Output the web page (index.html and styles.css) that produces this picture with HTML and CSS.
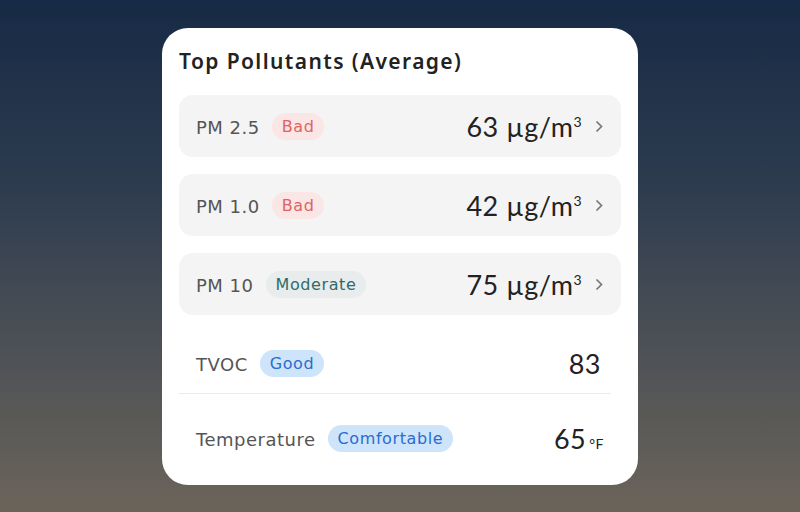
FILE: index.html
```html
<!DOCTYPE html>
<html lang="en">

<head>
    <meta charset="UTF-8">
    <meta name="viewport" content="width=device-width, initial-scale=1.0">
    <title>Air Quality</title>
    <link rel="stylesheet" href="styles.css">
</head>

<body>
    <div class="card">
        <h2 class="card-title">Top Pollutants (Average)</h2>

        <div class="pollutants">
            <a class="row tile" href="#">
                <span class="name">PM 2.5</span>
                <span class="badge bad">Bad</span>
                <span class="value">63 µg/m<sup>3</sup></span>
                <svg class="chevron" width="8" height="13" viewBox="0 0 8 13"><path d="M1.5 1.5 L6.5 6.5 L1.5 11.5" /></svg>
            </a>
            <a class="row tile" href="#">
                <span class="name">PM 1.0</span>
                <span class="badge bad">Bad</span>
                <span class="value">42 µg/m<sup>3</sup></span>
                <svg class="chevron" width="8" height="13" viewBox="0 0 8 13"><path d="M1.5 1.5 L6.5 6.5 L1.5 11.5" /></svg>
            </a>
            <a class="row tile" href="#">
                <span class="name">PM 10</span>
                <span class="badge moderate">Moderate</span>
                <span class="value">75 µg/m<sup>3</sup></span>
                <svg class="chevron" width="8" height="13" viewBox="0 0 8 13"><path d="M1.5 1.5 L6.5 6.5 L1.5 11.5" /></svg>
            </a>
        </div>

        <div class="row plain tvoc">
            <span class="name">TVOC</span>
            <span class="badge good">Good</span>
            <span class="value">83</span>
        </div>
        <div class="row plain temp">
            <span class="name">Temperature</span>
            <span class="badge good">Comfortable</span>
            <span class="value">65<small>°F</small></span>
        </div>
    </div>
</body>

</html>
```

FILE: styles.css
```css
body {
    margin: 0;
    height: 512px;
    background: linear-gradient(#172a45 0%, #2c3b4e 35%, #4a4f55 65%, #6b645a 100%);
    font-family: "DejaVu Sans", "Noto Sans", sans-serif;
    display: flex;
    justify-content: center;
    align-items: flex-start;
}

.card {
    margin-top: 28px;
    width: 476px;
    height: 457px;
    box-sizing: border-box;
    background-color: #fff;
    border-radius: 26px;
    padding: 17px 17px 15px;
}

.card-title {
    margin: 0;
    font-family: "Noto Sans", sans-serif;
    font-size: 21px;
    font-weight: 600;
    color: #222;
    line-height: 32px;
    letter-spacing: 1.4px;
}

.pollutants {
    margin-top: 18px;
    display: flex;
    flex-direction: column;
    gap: 17px;
}

.row {
    display: flex;
    align-items: center;
    text-decoration: none;
    padding: 0 18px 0 17px;
}

.tile {
    height: 62px;
    background-color: #f4f4f4;
    border-radius: 14px;
}

.name {
    font-size: 18px;
    letter-spacing: 0.5px;
    color: #555;
    margin-top: 2px;
}

.badge {
    margin-left: 12px;
    padding: 0 10px;
    height: 27px;
    line-height: 28px;
    border-radius: 14px;
    font-size: 16px;
    letter-spacing: 0.6px;
}

.badge.bad {
    background-color: #fbe6e6;
    color: #e06363;
}

.badge.moderate {
    background-color: #e8eced;
    color: #2f6b6b;
}

.badge.good {
    background-color: #cde4fb;
    color: #2a6ccf;
}

.value {
    margin-left: auto;
    font-family: "Lato", sans-serif;
    font-size: 27px;
    letter-spacing: 0.5px;
    color: #222;
}

.value sup {
    font-size: 14px;
    vertical-align: 10px;
    line-height: 0;
}

.value small {
    font-size: 14px;
    margin-left: 3px;
}

.chevron {
    margin-left: 13px;
    fill: none;
    stroke: #777;
    stroke-width: 1.7;
}

.tvoc {
    margin-top: 18px;
    height: 60px;
    margin-right: 10px;
    border-bottom: 1px solid #ececec;
    padding-right: 10px;
}

.temp {
    margin-top: 12px;
    height: 64px;
    padding-right: 17px;
}
```
